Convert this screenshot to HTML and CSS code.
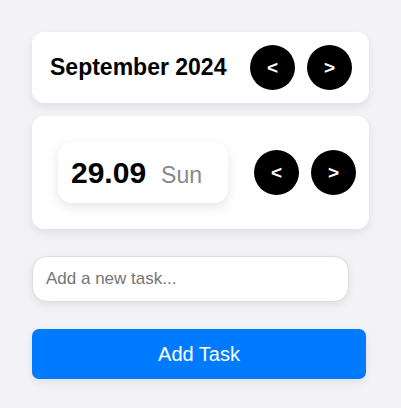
FILE: index.html
```html
<!DOCTYPE html>
<html>
<head>
<meta charset="utf-8">
<link rel="stylesheet" href="styles.css">
</head>
<body>
<div class="app">
  <div class="card month-card">
    <h2 class="month-title">September 2024</h2>
    <div class="nav">
      <button class="circle">&lt;</button>
      <button class="circle">&gt;</button>
    </div>
  </div>
  <div class="card day-card">
    <div class="date-box">
      <span class="date-num">29.09</span>
      <span class="date-day">Sun</span>
    </div>
    <div class="nav">
      <button class="circle">&lt;</button>
      <button class="circle">&gt;</button>
    </div>
  </div>
  <input class="task-input" type="text" placeholder="Add a new task...">
  <button class="add-btn">Add Task</button>
</div>
</body>
</html>
```
FILE: styles.css
```css
html, body {
  margin: 0;
  padding: 0;
  background: #f2f2f7;
  font-family: "Liberation Sans", Arial, sans-serif;
}
.app {
  padding: 32px;
  display: flex;
  flex-direction: column;
  align-items: flex-start;
}
.card {
  box-sizing: border-box;
  width: 337px;
  background: #fff;
  border-radius: 12px;
  box-shadow: 0 4px 10px rgba(0, 0, 0, 0.08);
  display: flex;
  align-items: center;
}
.month-card {
  height: 71px;
  padding: 0 17px 0 18px;
  justify-content: space-between;
}
.month-title {
  margin: 0;
  font-size: 23px;
  font-weight: bold;
  color: #000;
}
.nav {
  display: flex;
  gap: 12px;
}
.circle {
  width: 45px;
  height: 45px;
  border-radius: 50%;
  border: none;
  background: #000;
  color: #fff;
  font-family: "Liberation Sans", Arial, sans-serif;
  font-weight: bold;
  font-size: 19px;
  padding: 0;
  display: flex;
  align-items: center;
  justify-content: center;
}
.day-card {
  margin-top: 13px;
  height: 113px;
  padding: 0 13px 0 26px;
  justify-content: space-between;
}
.date-box {
  box-sizing: border-box;
  width: 170px;
  height: 61px;
  border-radius: 14px;
  background: #fff;
  box-shadow: 0 4px 12px rgba(0, 0, 0, 0.1);
  display: flex;
  align-items: baseline;
  padding: 14px 0 0 13px;
  gap: 15px;
}
.date-num {
  font-size: 30px;
  font-weight: bold;
  color: #000;
}
.date-day {
  font-size: 23px;
  color: #888;
}
.task-input {
  box-sizing: border-box;
  margin-top: 27px;
  width: 317px;
  height: 46px;
  border: 1px solid #ddd;
  border-radius: 15px;
  background: #fff;
  box-shadow: 0 3px 8px rgba(0, 0, 0, 0.08);
  padding: 0 13px;
  font-family: "Liberation Sans", Arial, sans-serif;
  font-size: 17px;
  outline: none;
}
.task-input::placeholder {
  color: #757575;
}
.add-btn {
  margin-top: 27px;
  width: 334px;
  height: 50px;
  border: none;
  border-radius: 7px;
  background: #007bff;
  color: #fff;
  font-family: "Liberation Sans", Arial, sans-serif;
  font-size: 20px;
  box-shadow: 0 3px 8px rgba(0, 0, 0, 0.08);
}
```
